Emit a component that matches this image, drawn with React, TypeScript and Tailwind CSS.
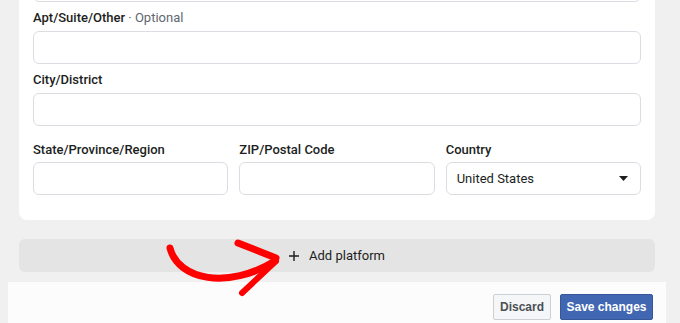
function Field({ label, optional, className = "" }: { label: string; optional?: boolean; className?: string }) {
  return (
    <div className={className}>
      <div className="h-4 text-[13px] leading-4 font-medium text-[#1c1e21]">
        {label}
        {optional && <span className="font-normal text-[#606770]"> · Optional</span>}
      </div>
    </div>
  );
}

function Input({ className = "" }: { className?: string }) {
  return <div className={`h-[33px] rounded-md border border-[#dadde1] bg-white ${className}`} />;
}

export default function App() {
  return (
    <div
      className="relative h-[323px] w-[680px] overflow-hidden bg-[#f0f0f0]"
      style={{ fontFamily: "Roboto, 'Liberation Sans', Arial, sans-serif" }}
    >
      {/* address card, scrolled so its top is cut off */}
      <div className="ml-[19px] -mt-[31px] w-[636px] rounded-lg bg-white px-[14px] pb-[25px]">
        <Input />
        <Field label="Apt/Suite/Other" optional className="mt-[8px]" />
        <Input className="mt-[5px]" />
        <Field label="City/District" className="mt-[8px]" />
        <Input className="mt-[5px]" />
        <div className="mt-[16px] grid grid-cols-3 gap-x-[11px]">
          <div>
            <Field label="State/Province/Region" />
            <Input className="mt-[4px]" />
          </div>
          <div>
            <Field label="ZIP/Postal Code" />
            <Input className="mt-[4px]" />
          </div>
          <div>
            <Field label="Country" />
            <div className="mt-[4px] flex h-[33px] items-center justify-between rounded-md border border-[#dadde1] bg-white pl-[10px] pr-[12px] text-[13px] text-[#1c1e21]">
              <span>United States</span>
              <svg width="9" height="5" viewBox="0 0 9 5">
                <path d="M0 0h9L4.5 5z" fill="#1c1e21" />
              </svg>
            </div>
          </div>
        </div>
      </div>

      {/* add platform */}
      <div className="ml-[19px] mt-[19px] flex h-[33px] w-[636px] items-center justify-center gap-[10px] rounded-md bg-[#e4e4e4] text-[13px] text-[#1c1e21]">
        <svg width="10" height="10" viewBox="0 0 10 10">
          <path d="M5 0v10M0 5h10" stroke="#1c1e21" strokeWidth="1.4" />
        </svg>
        <span>Add platform</span>
      </div>

      {/* footer */}
      <div className="ml-[8px] mt-[10px] flex h-[41px] w-[658px] items-start justify-end gap-[9px] bg-[#fcfcfc] pr-[13px] pt-[12px]">
        <button
          className="h-[26px] w-[58px] rounded-[2px] border border-[#ccd0d5] bg-[#f5f6f7] text-[12px] font-bold text-[#4b4f56]"
          style={{ fontFamily: "'Liberation Sans', Arial, sans-serif" }}
        >
          Discard
        </button>
        <button
          className="h-[26px] w-[93px] rounded-[2px] border border-[#365899] bg-[#4267b2] text-[12px] font-bold text-white"
          style={{ fontFamily: "'Liberation Sans', Arial, sans-serif" }}
        >
          Save changes
        </button>
      </div>

      {/* hand-drawn red arrow */}
      <svg className="pointer-events-none absolute left-0 top-0" width="680" height="323">
        <path
          d="M170 248 C 178 280, 228 290, 275 261"
          fill="none"
          stroke="#ff0000"
          strokeWidth="7"
          strokeLinecap="round"
        />
        <path d="M238 243 L 276 258" fill="none" stroke="#ff0000" strokeWidth="7" strokeLinecap="round" />
        <path d="M276 261 L 242 293" fill="none" stroke="#ff0000" strokeWidth="6" strokeLinecap="round" />
      </svg>
    </div>
  );
}
